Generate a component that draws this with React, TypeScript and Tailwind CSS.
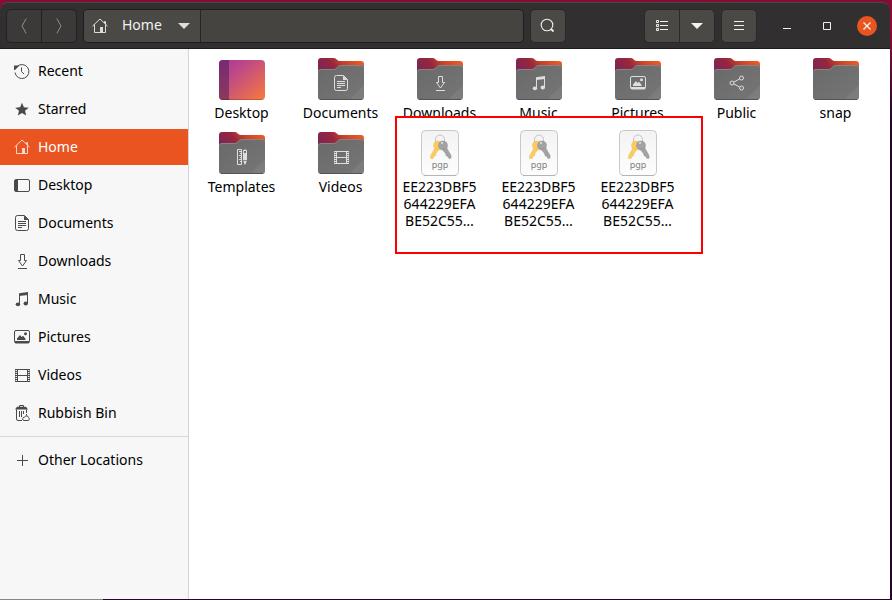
import React from "react";
import clsx from "clsx";

type IconProps = { className?: string };

const iconBase = {
  viewBox: "0 0 16 16",
  width: 16,
  height: 16,
  fill: "none",
  stroke: "currentColor",
  "aria-hidden": true,
} as const;

function RecentIcon({ className }: IconProps) {
  return (
    <svg {...iconBase} className={className}>
      <path d="M2.6 4A7 7 0 1 1 1 9.5" />
      <path d="M7.5 4.5v4l2.5 2.5" />
      <path d="M0 2.500h4.500v1L1 7H0z" fill="currentColor" stroke="none" />
    </svg>
  );
}

function StarIcon({ className }: IconProps) {
  return (
    <svg {...iconBase} className={className}>
      <path d="M8 1.8 9.9 6.3 14.8 6.7 11 9.8 12.2 14.6 8 12 3.8 14.6 5 9.8 1.2 6.7 6.1 6.3z" fill="currentColor" stroke="none" />
    </svg>
  );
}

function HomeIcon({ className }: IconProps) {
  return (
    <svg {...iconBase} className={className}>
      <path d="M0.4 8.2 8 1 15.6 8.2" />
      <path d="M2.5 6.5v8h11v-8" />
      <path d="M12.5 5V3.5h1v3" />
      <path d="M8 9h3v6H8z" fill="currentColor" stroke="none" />
    </svg>
  );
}

function DesktopIcon({ className }: IconProps) {
  return (
    <svg {...iconBase} className={className}>
      <rect x="0.5" y="2.5" width="15" height="12" rx="1.5" />
      <path d="M1 3h3v11H1z" fill="currentColor" stroke="none" />
    </svg>
  );
}

function DocumentIcon({ className }: IconProps) {
  return (
    <svg {...iconBase} className={className}>
      <path d="M10.5 0.5h-7a2 2 0 0 0-2 2v11a2 2 0 0 0 2 2h9a2 2 0 0 0 2-2v-9z" />
      <path d="M10 0.5v4.5h4.5z" fill="currentColor" stroke="none" />
      <path d="M4 6.5h8M4 8.5h8M4 10.5h8M4 12.5h4" />
    </svg>
  );
}

function DownloadIcon({ className }: IconProps) {
  return (
    <svg {...iconBase} className={className}>
      <path d="M6.5 1.5h4v6h2l-4 5.5-4-5.5h2z" />
      <path d="M4 15.5h9" />
    </svg>
  );
}

function MusicIcon({ className }: IconProps) {
  return (
    <svg {...iconBase} className={className}>
      <path d="M5.5 13V3.5M13.5 12V2" />
      <path d="M5 2.2 14 1v3L5 5z" fill="currentColor" stroke="none" />
      <ellipse cx="3.9" cy="13.3" rx="2.2" ry="1.9" fill="currentColor" stroke="none" />
      <ellipse cx="11.8" cy="12.5" rx="2.2" ry="1.9" fill="currentColor" stroke="none" />
    </svg>
  );
}

function PictureIcon({ className }: IconProps) {
  return (
    <svg {...iconBase} className={className}>
      <rect x="0.5" y="1.5" width="15" height="12.5" rx="1.5" />
      <path d="M1 12h14v2H1z" fill="currentColor" stroke="none" />
      <path d="M3 11V9.5L6 6l1.6 2L9 6.8l2.5 3V11z" fill="currentColor" stroke="none" />
      <circle cx="11.5" cy="4.8" r="1.5" fill="currentColor" stroke="none" />
    </svg>
  );
}

function VideoIcon({ className }: IconProps) {
  return (
    <svg {...iconBase} className={className}>
      <path d="M3.5 2.5h10M3.5 8.5h10M3.5 14.5h10M3.5 2v13M13.5 2v13" />
      <path d="M2 2v13M15 2v13" strokeWidth="2" strokeDasharray="1 1" />
      <path d="M1.5 2v13M15.5 2v13" strokeOpacity="0.5" />
    </svg>
  );
}

function TrashIcon({ className }: IconProps) {
  return (
    <svg {...iconBase} className={className}>
      <path d="M5.5 2V0.5h4V2" />
      <path d="M3 1.8h9L14 4.5H1z" fill="currentColor" stroke="none" />
      <path d="M2.5 4.5v9.5a1.5 1.5 0 0 0 1.5 1.5h4M12.5 4.5V8" />
      <path d="M5.5 6v6M7.5 6v6M9.5 6v3" />
      <path d="M10 15.5h4a1.5 1.5 0 0 0 0.6-2.8 2.2 2.2 0 0 0-4.2-0.4A1.6 1.6 0 0 0 10 15.5z" />
      <path d="M12.5 9v1.5" />
    </svg>
  );
}

function PlusIcon({ className }: IconProps) {
  return (
    <svg {...iconBase} className={className}>
      <path d="M8.5 3v11M3 8.5h11" />
    </svg>
  );
}

function ShareIcon({ className }: IconProps) {
  return (
    <svg {...iconBase} className={className}>
      <circle cx="3" cy="8" r="2" />
      <circle cx="12.5" cy="3" r="2" />
      <circle cx="12.5" cy="13" r="2" />
      <path d="M4.9 7 10.6 4M4.9 9l5.7 3" />
    </svg>
  );
}

function TemplateIcon({ className }: IconProps) {
  return (
    <svg {...iconBase} className={className}>
      <path d="M3.5 0.5v15h4v-15z" />
      <path d="M5 2.5h2M6 4.5h1M5 6.5h2M6 8.5h1M5 10.5h2M6 12.5h1" />
      <path d="M9 2a1.500 1.500 0 0 1 1.500-1.500h1A1.500 1.500 0 0 1 13 2v9l-1.500 4.500h-1L9 11z" fill="currentColor" stroke="none" />
      <path d="M10 3h2" stroke="#707070" strokeWidth="2" />
      <path d="M9 11.500h4" stroke="#8b8b8b" />
    </svg>
  );
}

function CaretIcon({ className }: IconProps) {
  return (
    <svg viewBox="0 0 12 6" width="12" height="6" className={className} aria-hidden>
      <path d="M0 0h12L6 6z" fill="currentColor" />
    </svg>
  );
}

function ChevronIcon({ flip }: { flip?: boolean }) {
  return (
    <svg viewBox="0 0 6 16" width="6" height="16" fill="none" stroke="currentColor" className={clsx(flip && "rotate-180")} aria-hidden>
      <path d="M5.2 0.5 1 8l4.2 7.5" />
    </svg>
  );
}

function DesktopTile() {
  return (
    <svg viewBox="0 0 48 48" width="48" height="48" aria-hidden>
      <defs>
        <linearGradient id="desk" x1="0" y1="0" x2="1" y2="1">
          <stop offset="0" stopColor="#a8369a" />
          <stop offset="0.35" stopColor="#bf4a85" />
          <stop offset="1" stopColor="#f97a3c" />
        </linearGradient>
        <linearGradient id="deskbar" x1="0" y1="0" x2="0" y2="1">
          <stop offset="0" stopColor="#772a72" />
          <stop offset="1" stopColor="#8c3a5c" />
        </linearGradient>
        <clipPath id="deskclip">
          <rect x="1" y="5" width="46" height="40" rx="4" />
        </clipPath>
      </defs>
      <g clipPath="url(#deskclip)">
        <rect x="1" y="5" width="46" height="40" fill="url(#desk)" />
        <rect x="1" y="5" width="10" height="40" fill="url(#deskbar)" />
        <path d="M1 44.5h46" stroke="#000" strokeOpacity="0.2" />
      </g>
    </svg>
  );
}

function FolderTile({ icon: Icon }: { icon?: React.FC<IconProps> }) {
  return (
    <span className="grid size-12 place-items-center">
      <svg viewBox="0 0 48 48" width="48" height="48" className="col-start-1 row-start-1" aria-hidden>
        <defs>
          <linearGradient id="back" x1="0" y1="0.6" x2="1" y2="0.2">
            <stop offset="0" stopColor="#77245a" />
            <stop offset="0.4" stopColor="#96263f" />
            <stop offset="0.65" stopColor="#cb4427" />
            <stop offset="1" stopColor="#f05a26" />
          </linearGradient>
          <linearGradient id="front" x1="0" y1="0" x2="1" y2="1">
            <stop offset="0" stopColor="#696969" />
            <stop offset="1" stopColor="#767676" />
          </linearGradient>
        </defs>
        <path d="M1 6a3 3 0 0 1 3-3h13c2.500 0 3 3 5.500 3H44a3 3 0 0 1 3 3v21H1z" fill="url(#back)" />
        <path d="M1 17a3 3 0 0 1 3-3h13c3 0 3.500-4 6.500-4H44a3 3 0 0 1 3 3v29a3 3 0 0 1-3 3H4a3 3 0 0 1-3-3z" fill="url(#front)" />
        <path d="M1.500 16.500a2.500 2.500 0 0 1 2.500-2h13c3 0 3.500-4 6.500-4H44a2.500 2.500 0 0 1 2.500 2" fill="none" stroke="#858585" />
        <path d="M47 30v12a3 3 0 0 1-3 3H32z" fill="#fff" fillOpacity="0.06" />
        <path d="M3 44.500h42" stroke="#545454" />
      </svg>
      {Icon && <Icon className="col-start-1 row-start-1 mt-2 text-[#dedede]" />}
    </span>
  );
}

function PgpTile() {
  return (
    <svg viewBox="0 0 48 48" width="48" height="48" aria-hidden>
      <defs>
        <linearGradient id="paper" x1="0" y1="0" x2="0" y2="1">
          <stop offset="0" stopColor="#f3f3f3" />
          <stop offset="1" stopColor="#fdfdfd" />
        </linearGradient>
      </defs>
      <rect x="5.500" y="1.500" width="37" height="45" rx="4" fill="url(#paper)" stroke="#c8c8c8" />
      <path d="M8 46.500h32" stroke="#b4b4b4" />
      <path d="M19.500 14V10.500a4.500 4.500 0 0 1 9 0V14" fill="none" stroke="#c4c4c4" />
      <g fill="#fbcb62" stroke="#f0bd50" strokeWidth="0.500">
        <circle cx="22" cy="16.500" r="4.500" />
        <path d="M19 19 14.500 27v2.500h2.500l1-2.200 1.600-0.600 0.600-2.600 2.600-3.600z" />
      </g>
      <g fill="#a3a3a3" stroke="#8f8f8f" strokeWidth="0.500">
        <circle cx="27" cy="16.500" r="4.500" />
        <path d="M26.400 20.500 29.500 24.500l0.800 2.400 1.600 0.400 0.800 2H35V26.500l-4.500-8z" />
      </g>
      <circle cx="26" cy="14" r="1" fill="#e4e4e4" />
      <text x="24" y="39" textAnchor="middle" fill="#808080" fontSize="9" fontFamily="Noto Sans, sans-serif">
        pgp
      </text>
    </svg>
  );
}

interface Place {
  label: string;
  icon: React.FC<IconProps>;
  active?: boolean;
}

const places: Place[] = [
  { label: "Recent", icon: RecentIcon },
  { label: "Starred", icon: StarIcon },
  { label: "Home", icon: HomeIcon, active: true },
  { label: "Desktop", icon: DesktopIcon },
  { label: "Documents", icon: DocumentIcon },
  { label: "Downloads", icon: DownloadIcon },
  { label: "Music", icon: MusicIcon },
  { label: "Pictures", icon: PictureIcon },
  { label: "Videos", icon: VideoIcon },
  { label: "Rubbish Bin", icon: TrashIcon },
];

const folders: { label: string; icon?: React.FC<IconProps> }[] = [
  { label: "Documents", icon: DocumentIcon },
  { label: "Downloads", icon: DownloadIcon },
  { label: "Music", icon: MusicIcon },
  { label: "Pictures", icon: PictureIcon },
  { label: "Public", icon: ShareIcon },
  { label: "snap" },
  { label: "Templates", icon: TemplateIcon },
  { label: "Videos", icon: VideoIcon },
];

const keyName = "EE223DBF5644229EFABE52C55…";

function PlaceLink({ label, icon: Icon, active }: Place) {
  return (
    <a
      href="#"
      className={clsx(
        "flex h-9 items-center gap-2 pl-[14px]",
        active ? "bg-[#e95420] text-white" : "text-black"
      )}
    >
      <Icon className={active ? "text-[#fbd5c8]" : "text-[#4a4a4a]"} />
      <span className="pb-[2px]">{label}</span>
    </a>
  );
}

function FileItem({ label, children }: { label: string; children: React.ReactNode }) {
  return (
    <button type="button" className="flex flex-col items-center gap-px leading-[17px] text-black">
      {children}
      <span className="max-w-[78px] break-all">{label}</span>
    </button>
  );
}

function HeaderBar() {
  return (
    <header className="flex h-[47px] items-center rounded-t-lg border-t border-b border-t-[#4a4848] border-b-[#1c1b1b] bg-[#322f30] pr-[3px] pl-[6px] text-[#f2f1ef]">
      <div className="flex h-[34px] w-[71px] divide-x divide-[#232222] rounded-[5px] border border-[#232222] bg-[#3b3a39] text-[#8f8e8c]">
        <button type="button" aria-label="Back" disabled className="grid flex-1 place-items-center">
          <ChevronIcon />
        </button>
        <button type="button" aria-label="Forward" disabled className="grid flex-1 place-items-center">
          <ChevronIcon flip />
        </button>
      </div>

      <div className="ml-[6px] flex h-[34px] min-w-0 flex-1 rounded-[5px] border border-[#1f1e1e] bg-[#454440]">
        <button type="button" className="flex w-[117px] items-center rounded-l border-r border-[#262525] bg-[#4b4946] pl-2">
          <HomeIcon className="text-[#dddcda]" />
          <span className="ml-[14px] pb-[2px]">Home</span>
          <CaretIcon className="ml-auto mr-[10px] text-[#dddcda]" />
        </button>
      </div>

      <button type="button" aria-label="Search" className="ml-[6px] grid h-[34px] w-9 place-items-center rounded-[5px] border border-[#2a2828] bg-[#4a4946]">
        <svg viewBox="0 0 16 16" width="16" height="16" fill="none" stroke="currentColor" aria-hidden>
          <circle cx="7" cy="7" r="5.800" strokeWidth="1.100" />
          <path d="M11 11 13.500 13.500" strokeWidth="1.800" />
        </svg>
      </button>

      <div className="ml-[78px] flex h-[34px] w-[71px] divide-x divide-[#2a2828] rounded-[5px] border border-[#2a2828] bg-[#4a4946]">
        <button type="button" aria-label="List view" className="grid flex-1 place-items-center">
          <svg {...iconBase}>
            <path d="M2.500 2.500h2v2h-2zM2.500 6.500h2v2h-2zM2.500 10.500h2v2h-2zM6 3.500h8M6 7.500h8M6 11.500h8" />
          </svg>
        </button>
        <button type="button" aria-label="View options" className="grid flex-1 place-items-center">
          <CaretIcon />
        </button>
      </div>

      <button type="button" aria-label="Menu" className="ml-[6px] grid h-[34px] w-9 place-items-center rounded-[5px] border border-[#2a2828] bg-[#4a4946]">
        <svg {...iconBase}>
          <path d="M3 3.500h10M3 7.500h10M3 11.500h10" />
        </svg>
      </button>

      <div className="ml-[10px] flex">
        <button type="button" aria-label="Minimise" className="grid h-[34px] w-10 place-items-center">
          <svg {...iconBase}>
            <path d="M4 10.500h8" />
          </svg>
        </button>
        <button type="button" aria-label="Maximise" className="grid h-[34px] w-10 place-items-center">
          <svg {...iconBase}>
            <path d="M4.500 4.500h7v7h-7z" />
          </svg>
        </button>
        <button type="button" aria-label="Close" className="grid h-[34px] w-10 place-items-center">
          <span className="grid size-5 place-items-center rounded-full bg-[#e95420]">
            <svg {...iconBase}>
              <path d="M4.500 4.500l7 7M11.500 4.500l-7 7" strokeWidth="1.300" />
            </svg>
          </span>
        </button>
      </div>
    </header>
  );
}

export default function App() {
  return (
    <div className="flex min-h-screen flex-col bg-linear-to-b from-[#870b33] from-5% to-[#26052c] to-20% pt-[2px] font-['Noto_Sans',sans-serif] text-[14px]">
      <div className="flex flex-1 flex-col pr-[2px]">
        <HeaderBar />

        <div className="flex flex-1">
          <nav className="w-[189px] shrink-0 border-r border-[#d5d5d5] bg-[#f7f7f7]">
            <div className="flex flex-col gap-[2px] pt-1 pb-[5px]">
              {places.map((place) => (
                <PlaceLink key={place.label} {...place} />
              ))}
            </div>
            <div className="border-t border-[#d9d9d9] pt-[5px]">
              <PlaceLink label="Other Locations" icon={PlusIcon} />
            </div>
          </nav>

          <main className="flex-1 bg-white pt-[6px] pr-[5px] pl-[3px]">
            <div className="grid grid-cols-[repeat(auto-fill,minmax(96px,1fr))] items-start gap-y-2">
              <FileItem label="Desktop">
                <DesktopTile />
              </FileItem>
              {folders.map((folder) => (
                <FileItem key={folder.label} label={folder.label}>
                  <FolderTile icon={folder.icon} />
                </FileItem>
              ))}

              {/* highlighted key files */}
              <div className="relative col-span-3">
                <div className="absolute -top-[13px] -right-4 -bottom-[25px] left-[5px] border-2 border-[#ff0000] bg-white" />
                <div className="relative grid grid-cols-3">
                  {[1, 2, 3].map((n) => (
                    <FileItem key={n} label={keyName}>
                      <PgpTile />
                    </FileItem>
                  ))}
                </div>
              </div>
            </div>
          </main>
        </div>
      </div>
      <div className="h-px">
        <div className="h-px w-[103px] bg-[#858585]" />
      </div>
    </div>
  );
}
